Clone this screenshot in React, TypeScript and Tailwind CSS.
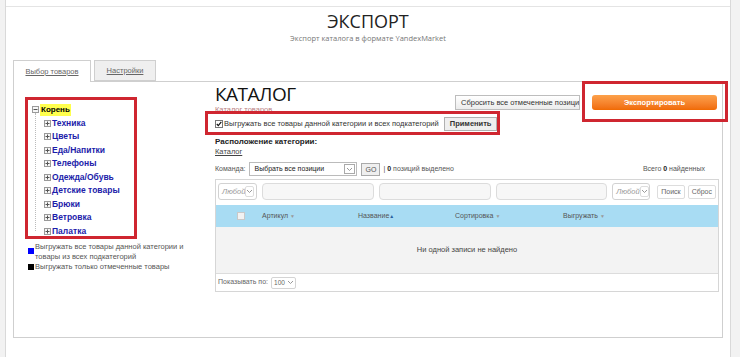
import React from 'react'

const RED = 'border-[#cf2630]'

const Toggle = ({ minus }: { minus?: boolean }) => (
  <svg width="7" height="7" viewBox="0 0 7 7" className="shrink-0">
    <rect x="0.5" y="0.5" width="6" height="6" fill="#f6f6f6" stroke="#9a9a9a" />
    <path d="M1.5 3.5h4" stroke="#555" />
    {!minus && <path d="M3.5 1.5v4" stroke="#555" />}
  </svg>
)

const Chevron = () => (
  <svg width="7" height="5" viewBox="0 0 7 5">
    <path d="M1 1l2.5 2.5L6 1" fill="none" stroke="#999" strokeWidth="1" />
  </svg>
)

const AnySelect = ({ w }: { w: string }) => (
  <div className={`${w} h-[17px] shrink-0 flex items-center justify-between rounded-[3px] border border-[#d2d2d2] bg-white pl-[3px] pr-[2px]`}>
    <span className="italic text-[7.5px] text-[#999]">Любой</span>
    <span className="w-[9px] h-[11px] flex items-center justify-center rounded-[2px] border border-[#ddd]">
      <Chevron />
    </span>
  </div>
)

const FilterInput = () => (
  <div className="flex-1 h-[17px] rounded-[4px] border border-[#dcdcdc] bg-[#f7f7f7]" />
)

const tree = ['Техника', 'Цветы', 'Еда/Напитки', 'Телефоны', 'Одежда/Обувь', 'Детские товары', 'Брюки', 'Ветровка', 'Палатка']

export default function App() {
  return (
    <div className="w-[740px] h-[357px] overflow-hidden bg-[#f2f2f2] pl-[5px] pr-[9px] font-['Liberation_Sans',Arial,sans-serif] text-[#333]">
      <div className="relative h-full bg-white border-x border-[#d9d9d9]">
        <div className="h-[7px] border-b border-[#e4e4e4]" />

        {/* header */}
        <div className="text-center pt-[3px]">
          <div className="font-['Open_Sans',sans-serif] text-[18px] leading-[22px] text-[#222]">ЭКСПОРТ</div>
          <div className="font-['Open_Sans',sans-serif] text-[7.5px] leading-[12px] text-[#777]">Экспорт каталога в формате YandexMarket</div>
        </div>

        {/* tabs */}
        <div className="mt-[16px] mx-[7px] flex items-start gap-[3px] h-[21px]">
          <div className="relative z-10 h-[22px] w-[78px] bg-white border border-b-0 border-[#cfcfcf] flex items-center justify-center text-[7.5px] underline text-[#666]">
            Выбор товаров
          </div>
          <div className="h-[21px] w-[62px] bg-[#efefef] border border-[#cfcfcf] flex items-center justify-center text-[7.5px] underline text-[#666]">
            Настройки
          </div>
        </div>

        {/* panel */}
        <div className="mx-[7px] h-[257px] border border-[#cfcfcf] flex">
          {/* left column */}
          <div className="w-[201px] shrink-0 pl-[11px] pt-[15px]">
            <div className={`w-[112px] h-[142px] border-[3px] ${RED} pl-[4px] pt-[3px] relative`}>
              <div className="absolute left-[7px] top-[13px] h-[118px] border-l border-dotted border-[#bbb]" />
              <div className="h-[13.5px] flex items-center gap-[1px]">
                <Toggle minus />
                <span className="bg-[#ffff4d] px-[1px] text-[8px] leading-[12px] font-bold text-black">Корень</span>
              </div>
              {tree.map(t => (
                <div key={t} className="h-[13.5px] flex items-center gap-[1px] pl-[12px]">
                  <Toggle />
                  <span className="text-[8.5px] font-bold text-[#1c1caa] whitespace-nowrap">{t}</span>
                </div>
              ))}
            </div>
            <div className="mt-[3px] pl-[3px] text-[7.5px] leading-[10px] text-[#555]">
              <div className="flex">
                <span className="w-[6px] h-[6px] bg-[#0000ff] mt-[6px] mr-[1px] shrink-0" />
                <span>Выгружать все товары данной категории и<br />товары из всех подкатегорий</span>
              </div>
              <div className="flex items-center">
                <span className="w-[6px] h-[6px] bg-black mr-[1px] shrink-0" />
                <span>Выгружать только отмеченные товары</span>
              </div>
            </div>
          </div>

          {/* right column */}
          <div className="flex-1 pr-[3px]">
            <div className="flex items-start">
              <div className="pt-[1px]">
                <div className="font-['Open_Sans',sans-serif] text-[19px] leading-[22px] text-[#111] tracking-[-0.5px]">КАТАЛОГ</div>
                <div className="text-[7.5px] leading-[9px] text-[#b98080]">Каталог товаров</div>
              </div>
              <div className="ml-auto mt-[13px] mr-[2px] flex gap-[12px]">
                <div className="w-[125px] h-[15px] overflow-hidden whitespace-nowrap border border-[#bdbdbd] bg-gradient-to-b from-white to-[#ececec] pl-[5px] text-[7.5px] leading-[13px] text-[#333]">
                  Сбросить все отмеченные позиции
                </div>
                <div className="w-[125px] h-[15px] rounded-[3px] bg-gradient-to-b from-[#fca14a] to-[#f06a00] text-center text-[7.5px] leading-[15px] font-bold text-white">
                  Экспортировать
                </div>
              </div>
            </div>

            <div className="mt-[3px] h-[14px] flex items-center text-[7.5px] text-[#333]">
              <span className="w-[8px] h-[8px] border border-[#777] bg-white flex items-center justify-center mr-[1px]">
                <svg width="6" height="6" viewBox="0 0 6 6"><path d="M0.8 3l1.5 1.6L5.3 0.8" fill="none" stroke="#111" strokeWidth="1.2" /></svg>
              </span>
              <span>Выгружать все товары данной категории и всех подкатегорий</span>
              <span className="ml-[5px] h-[14px] px-[5px] border border-[#b0b0b0] bg-[#efefef] font-bold leading-[12px]">Применить</span>
            </div>

            <div className="mt-[6px] text-[8px] leading-[10px] font-bold text-[#222]">Расположение категории:</div>
            <div className="text-[7.5px] leading-[10px] underline text-[#444]">Каталог</div>

            <div className="mt-[5px] h-[14px] flex items-center text-[7px] text-[#555]">
              <span className="mr-[4px]">Команда:</span>
              <div className="w-[108px] h-[14px] flex items-center justify-between border border-[#bbb] bg-white pl-[4px] text-[#222]">
                <span>Выбрать все позиции</span>
                <span className="w-[11px] h-[10px] mr-[1px] border border-[#aaa] flex items-center justify-center"><Chevron /></span>
              </div>
              <span className="ml-[4px] w-[19px] h-[13px] border border-[#aaa] bg-[#efefef] text-center leading-[11px]">GO</span>
              <span className="ml-[3px]">| <b className="text-[#222]">0</b> позиций выделено</span>
              <span className="ml-auto mr-[14px]">Всего <b className="text-[#222]">0</b> найденных</span>
            </div>

            {/* table */}
            <div className="mt-[3px] border border-[#d6d6d6] text-[7px] text-[#666]">
              <div className="mt-[3px] mx-[2px] flex items-center gap-[5px]">
                <AnySelect w="w-[39px]" />
                <FilterInput />
                <FilterInput />
                <FilterInput />
                <AnySelect w="w-[38px]" />
                <div className="flex gap-[3px] ml-[2px]">
                  <span className="h-[14px] px-[3px] border border-[#ddd] rounded-[2px] leading-[12px]">Поиск</span>
                  <span className="h-[14px] px-[3px] border border-[#ddd] rounded-[2px] leading-[12px]">Сброс</span>
                </div>
              </div>
              <div className="mt-[5px] h-[22px] bg-[#a8dcf3] flex items-center text-[#555]">
                <div className="w-[46px] flex justify-center pl-[4px]">
                  <span className="w-[8px] h-[8px] border border-[#c8c8c8] bg-[#f2f2f2]" />
                </div>
                <div className="w-[96px]">Артикул <span className="text-[5px] text-[#999]">▼</span></div>
                <div className="w-[97px]">Название<span className="text-[5px] text-[#2a5fa0]">▲</span></div>
                <div className="w-[108px]">Сортировка <span className="text-[5px] text-[#999]">▼</span></div>
                <div>Выгружать <span className="text-[5px] text-[#999]">▼</span></div>
              </div>
              <div className="h-[46px] bg-[#f3f3f3] flex items-center justify-center text-[7.5px] text-[#444]">
                Ни одной записи не найдено
              </div>
              <div className="h-[18px] border-t border-[#dcdcdc] flex items-center pl-[2px]">
                <span>Показывать по:</span>
                <span className="ml-[3px] h-[12px] w-[25px] flex items-center justify-between rounded-[2px] border border-[#d4d4d4] pl-[2px] pr-[1px] text-[6.5px]">
                  100<Chevron />
                </span>
              </div>
            </div>
          </div>
        </div>

        {/* annotation frames */}
        <div className={`absolute left-[199px] top-[111px] w-[295px] h-[24px] border-[3px] ${RED}`} />
        <div className={`absolute left-[576px] top-[81px] w-[146px] h-[41px] border-[3px] ${RED}`} />
      </div>
    </div>
  )
}
